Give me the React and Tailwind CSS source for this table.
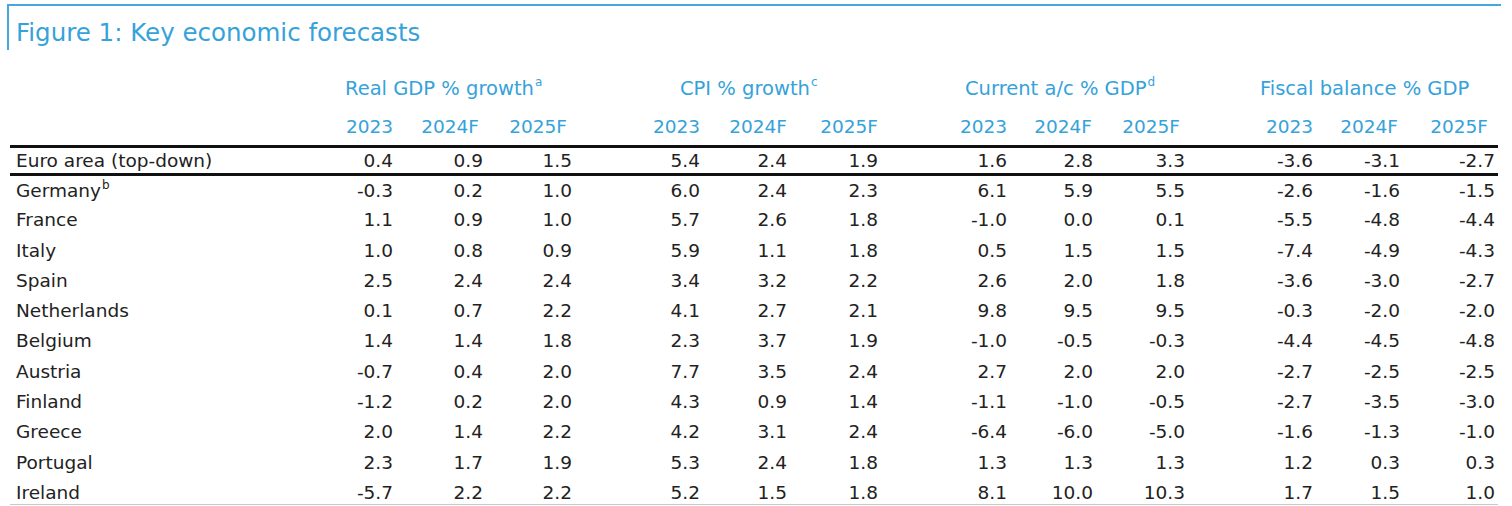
import React from 'react';

const COLS = [
  'w-[88px]', 'w-[90px]', 'w-[89px]',
  'w-[128px]', 'w-[87px]', 'w-[91px]',
  'w-[129px]', 'w-[86px]', 'w-[92px]',
  'w-[128px]', 'w-[87px]', 'w-[95px]',
];

// header years sit a few px left of the figures in some columns
const HEAD_PAD = [
  'pr-0', 'pr-[4px]', 'pr-[5px]',
  'pr-0', 'pr-0', 'pr-0',
  'pr-0', 'pr-[1px]', 'pr-[5px]',
  'pr-0', 'pr-[2px]', 'pr-[7px]',
];

const YEARS = ['2023', '2024F', '2025F'];

const GROUPS = [
  { label: 'Real GDP % growth', sup: 'a', w: 'w-[267px]', pl: 'pl-[40px]' },
  { label: 'CPI % growth', sup: 'c', w: 'w-[306px]', pl: 'pl-[108px]' },
  { label: 'Current a/c % GDP', sup: 'd', w: 'w-[307px]', pl: 'pl-[87px]' },
  { label: 'Fiscal balance % GDP', sup: null, w: 'w-[310px]', pl: 'pl-[75px]' },
];

const ROWS = [
  ['Germany', 'b', ['-0.3', '0.2', '1.0', '6.0', '2.4', '2.3', '6.1', '5.9', '5.5', '-2.6', '-1.6', '-1.5']],
  ['France', null, ['1.1', '0.9', '1.0', '5.7', '2.6', '1.8', '-1.0', '0.0', '0.1', '-5.5', '-4.8', '-4.4']],
  ['Italy', null, ['1.0', '0.8', '0.9', '5.9', '1.1', '1.8', '0.5', '1.5', '1.5', '-7.4', '-4.9', '-4.3']],
  ['Spain', null, ['2.5', '2.4', '2.4', '3.4', '3.2', '2.2', '2.6', '2.0', '1.8', '-3.6', '-3.0', '-2.7']],
  ['Netherlands', null, ['0.1', '0.7', '2.2', '4.1', '2.7', '2.1', '9.8', '9.5', '9.5', '-0.3', '-2.0', '-2.0']],
  ['Belgium', null, ['1.4', '1.4', '1.8', '2.3', '3.7', '1.9', '-1.0', '-0.5', '-0.3', '-4.4', '-4.5', '-4.8']],
  ['Austria', null, ['-0.7', '0.4', '2.0', '7.7', '3.5', '2.4', '2.7', '2.0', '2.0', '-2.7', '-2.5', '-2.5']],
  ['Finland', null, ['-1.2', '0.2', '2.0', '4.3', '0.9', '1.4', '-1.1', '-1.0', '-0.5', '-2.7', '-3.5', '-3.0']],
  ['Greece', null, ['2.0', '1.4', '2.2', '4.2', '3.1', '2.4', '-6.4', '-6.0', '-5.0', '-1.6', '-1.3', '-1.0']],
  ['Portugal', null, ['2.3', '1.7', '1.9', '5.3', '2.4', '1.8', '1.3', '1.3', '1.3', '1.2', '0.3', '0.3']],
  ['Ireland', null, ['-5.7', '2.2', '2.2', '5.2', '1.5', '1.8', '8.1', '10.0', '10.3', '1.7', '1.5', '1.0']],
];

const EURO = ['0.4', '0.9', '1.5', '5.4', '2.4', '1.9', '1.6', '2.8', '3.3', '-3.6', '-3.1', '-2.7'];

function Cells({ values }) {
  return values.map((v, i) => (
    <div key={i} className={`${COLS[i]} shrink-0 text-right`}>
      {v}
    </div>
  ));
}

function Label({ name, sup }) {
  return (
    <div className="w-[295px] shrink-0 pl-[6px] whitespace-nowrap">
      {name}
      {sup && <sup className="text-[12px] -top-[8px] ml-[1px]">{sup}</sup>}
    </div>
  );
}

export default function App() {
  return (
    <div className="w-[1512px] h-[506px] overflow-hidden bg-white font-['DejaVu_Sans',sans-serif] text-[#222]">
      <div className="ml-[7px] mt-[4px] h-[46px] w-[1494px] border-l-2 border-t-2 border-[#45a7dc] pl-[7px] pt-[13px]">
        <h1 className="text-[24.5px] leading-[28px] text-[#36a2da]">
          Figure 1: Key economic forecasts
        </h1>
      </div>

      <div className="ml-[10px] mt-[24px] w-[1488px]">
        <div className="flex h-[30px] items-center text-[19.5px] text-[#36a2da]">
          <div className="w-[295px] shrink-0" />
          {GROUPS.map((g) => (
            <div key={g.label} className={`${g.w} ${g.pl} shrink-0 whitespace-nowrap`}>
              {g.label}
              {g.sup && <sup className="text-[12px] -top-[9px] ml-[1px]">{g.sup}</sup>}
            </div>
          ))}
        </div>

        <div className="mt-[5px] flex h-[39px] items-center border-b-[3px] border-[#111] text-[18.5px] text-[#36a2da]">
          <div className="w-[295px] shrink-0" />
          {COLS.map((c, i) => (
            <div key={i} className={`${c} ${HEAD_PAD[i]} shrink-0 text-right`}>
              {YEARS[i % 3]}
            </div>
          ))}
        </div>

        <div className="text-[18.5px]">
          <div className="flex h-[28px] items-center border-b-[3px] border-[#111]">
            <Label name="Euro area (top-down)" />
            <Cells values={EURO} />
          </div>
          {ROWS.map(([name, sup, values], idx) => {
            const first = idx === 0;
            const last = idx === ROWS.length - 1;
            return (
              <div
                key={name}
                className={
                  first
                    ? 'flex h-[29px] items-center'
                    : last
                    ? 'flex h-[27px] items-center border-b border-[#c9c9c9] pt-[4px]'
                    : 'flex h-[30.3px] items-center'
                }
              >
                <Label name={name} sup={sup} />
                <Cells values={values} />
              </div>
            );
          })}
        </div>
      </div>
    </div>
  );
}
